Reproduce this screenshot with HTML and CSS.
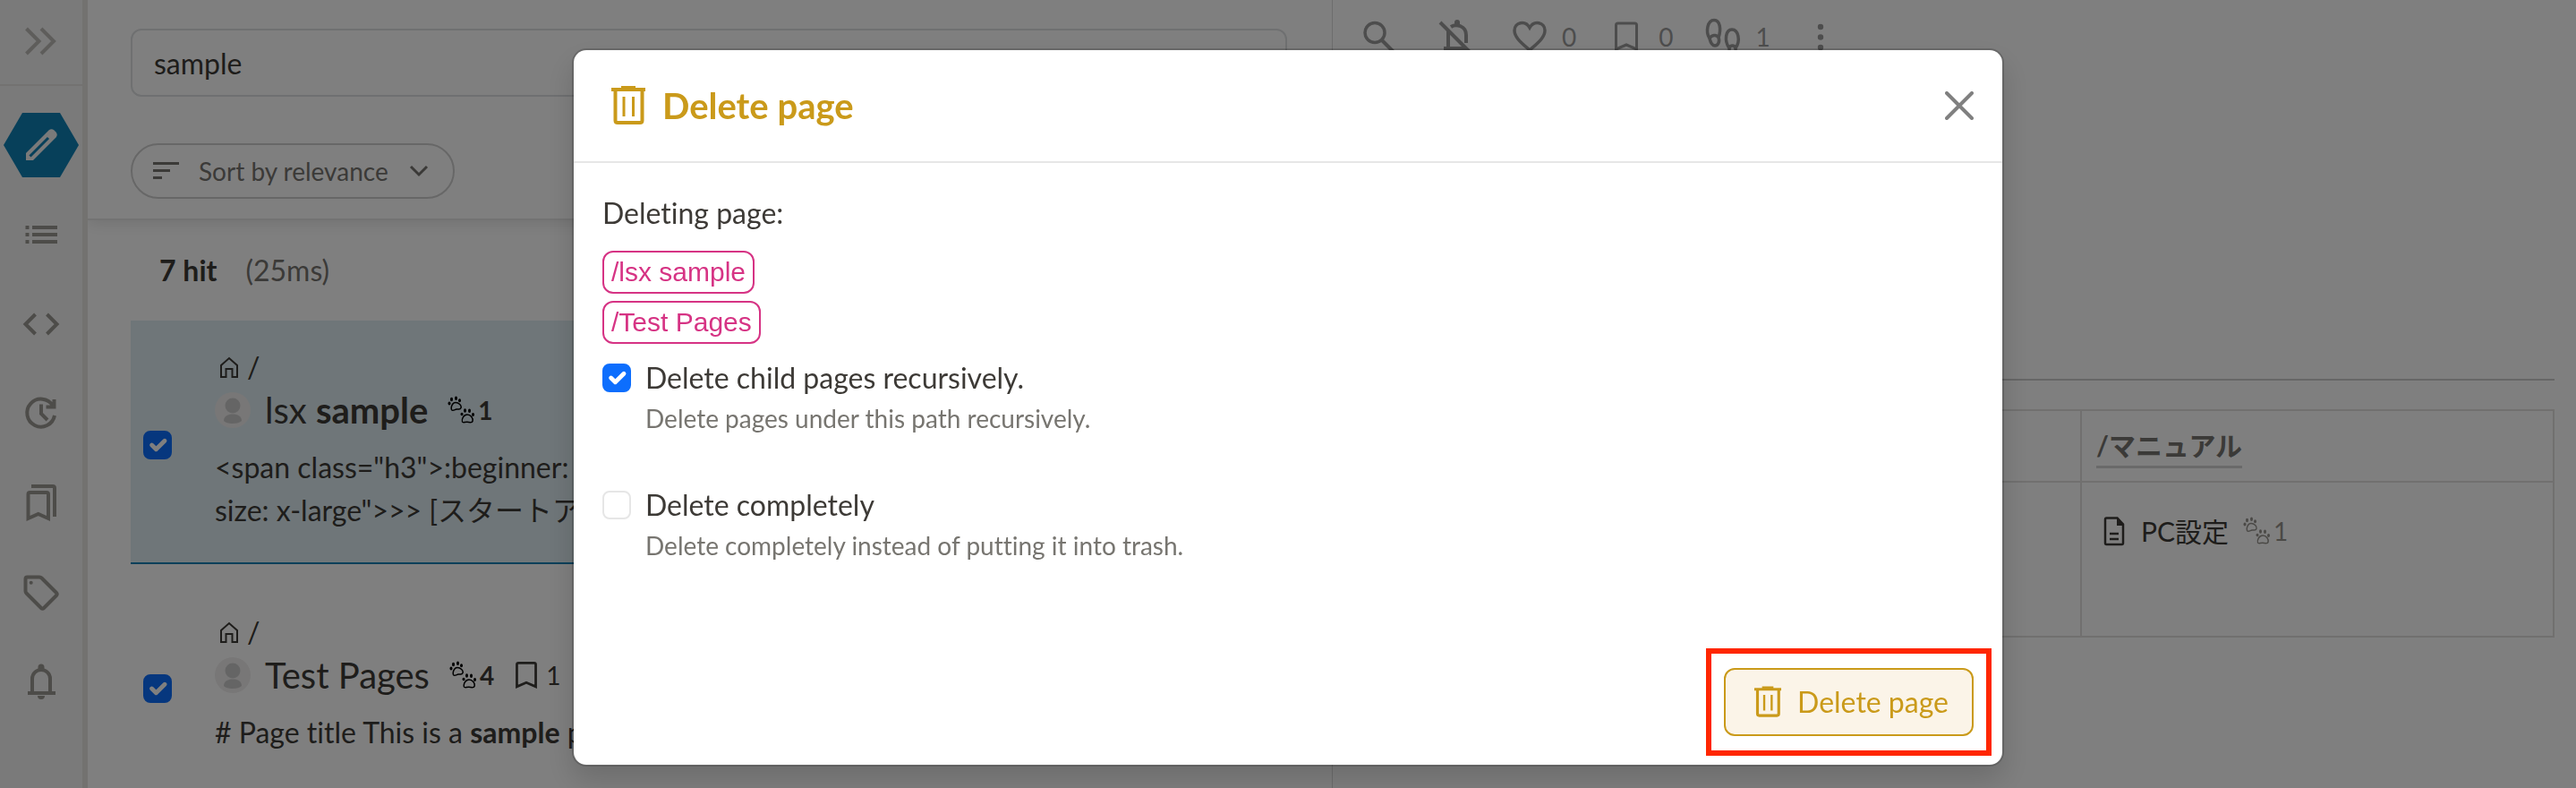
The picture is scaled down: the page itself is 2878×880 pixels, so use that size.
FILE: index.html
```html
<!DOCTYPE html>
<html lang="en">
<head>
  <meta charset="UTF-8">
  <title>Search: sample</title>
  <link rel="stylesheet" href="styles.css">
</head>
<body>
  <!-- shared icons -->
  <svg class="sprite" aria-hidden="true">
    <symbol id="i-trash" viewBox="0 0 48 48">
      <path d="M5 6h38M16 4h16M9.500 7v33.500q0 2.500 2.500 2.500h25q2.500 0 2.500-2.500V7" stroke-width="4"/>
      <path d="M19 14v22M29.500 14v22" stroke-width="3"/>
    </symbol>
    <symbol id="i-home" viewBox="0 0 32 32">
      <path d="M7 27V14l9-8 9 8v13h-5.500v-9h-7v9z" stroke-width="2"/>
    </symbol>
    <symbol id="i-bookmark" viewBox="0 0 48 48">
      <path d="M12.500 38V11q0-2 2-2h19q2 0 2 2v27L24 33z" stroke-width="3"/>
    </symbol>
    <symbol id="i-paws" viewBox="0 0 32 32">
      <g>
        <path d="M4.500 15.500c-1-3 1-8 4.500-8s7 3.500 6 6-3 1-5 1.500-4.500 2.500-5.500.5z" stroke-width="1.500"/>
        <g class="solid"><ellipse cx="2" cy="8.500" rx="1.500" ry="2"/><ellipse cx="4.500" cy="4" rx="1.500" ry="2.200"/><ellipse cx="9.500" cy="2.700" rx="1.500" ry="2.200"/><ellipse cx="13.500" cy="5.300" rx="1.500" ry="2"/></g>
      </g>
      <g>
        <path d="M16.500 29c-1-3 1.500-8 5.500-8s7 4 6 7.500c-.5 2-3.500 1-6 .8s-4.800 1.200-5.500-.3z" stroke-width="1.500"/>
        <g class="solid"><ellipse cx="16" cy="20.500" rx="1.500" ry="1.800"/><ellipse cx="19.500" cy="16.500" rx="1.500" ry="2.200"/><ellipse cx="24.500" cy="16.800" rx="1.500" ry="2.200"/><ellipse cx="28.500" cy="21" rx="1.500" ry="1.900"/></g>
      </g>
    </symbol>
    <symbol id="i-user" viewBox="0 0 40 40">
      <circle cx="20" cy="20" r="20" class="avatar-bg"/>
      <circle cx="20" cy="15" r="8.500" class="avatar-fg"/>
      <path d="M10 32c0-5 4-7.500 10-7.500S30 27 30 32c-2 2-5 3-10 3s-8-1-10-3z" class="avatar-fg"/>
    </symbol>
  </svg>

  <div class="app">
    <nav class="sidebar">
      <button class="sidebar-toggle" aria-label="Expand sidebar">
        <svg class="icon" viewBox="0 0 48 48"><path d="M7.500 9 21.500 23 7.500 37M24 9 38 23 24 37" stroke-width="4"/></svg>
      </button>
      <button class="sidebar-edit" aria-label="Create page">
        <svg viewBox="0 0 84 72">
          <path class="hexagon" d="M21 0h42l21 36-21 36H21L0 36z"/>
          <path class="pencil" d="M25 53v-8l25.500-25.500q3-2.500 6 0l2 2q2.500 3 0 6L33 53z"/>
          <path class="pencil-line" d="M29.500 48.500 50 28"/>
        </svg>
      </button>
      <a href="#" class="sidebar-item" aria-label="Page tree">
        <svg class="icon" viewBox="0 0 48 48"><path d="M14 16h28M14 24h28M14 32h28M6.500 16h4M6.500 24h4M6.500 32h4" stroke-width="4"/></svg>
      </a>
      <a href="#" class="sidebar-item" aria-label="Custom sidebar">
        <svg class="icon" viewBox="0 0 48 48"><path d="M17.500 13 6.500 24l11 11M30.500 13l11 11-11 11" stroke-width="4"/></svg>
      </a>
      <a href="#" class="sidebar-item" aria-label="Recent changes">
        <svg class="icon" viewBox="0 0 48 48"><path d="M39 26A15.500 15.500 0 1 1 37 15M38.500 8v8.500h-9M24 13.500V24l7 7" stroke-width="4"/></svg>
      </a>
      <a href="#" class="sidebar-item" aria-label="Bookmarks">
        <svg class="icon" viewBox="0 0 48 48"><path d="M9.500 41V14q0-2 2-2h18.500q2 0 2 2v27l-11.250-5zM13 5h24q2 0 2 2v32" stroke-width="4"/></svg>
      </a>
      <a href="#" class="sidebar-item" aria-label="Tags">
        <svg class="icon" viewBox="0 0 48 48"><path d="M6.500 8.500q0-2 2-2H22q1.500 0 2.500 1L41 24q1.500 1.500 0 3L27 41q-1.500 1.500-3 0L7.500 24.500q-1-1-1-2.500z" stroke-width="4"/><circle class="solid" cx="12.700" cy="12.700" r="2"/></svg>
      </a>
      <a href="#" class="sidebar-item" aria-label="Notifications">
        <svg class="icon" viewBox="0 0 48 48"><path d="M9 36h31M14 36V20a10 10 0 0 1 20 0v16" stroke-width="4"/><path class="solid" d="M20.500 9V7a3.500 3.500 0 0 1 7 0v2zM20 39h8a4 4 0 0 1-8 0z"/></svg>
      </a>
    </nav>

    <main class="search">
      <div class="search-control">
        <input type="text" class="search-input" value="sample" aria-label="Search">
        <button class="sort">
          <svg class="icon-sm" viewBox="0 0 32 32"><path d="M1 7.500h29M1 15.500h19M1 23.500h10" stroke-width="3"/></svg>
          <span>Sort by relevance</span>
          <svg class="chevron" viewBox="0 0 24 24"><path d="M3 7l9 9 9-9" stroke-width="3"/></svg>
        </button>
      </div>

      <div class="hits"><strong>7 hit</strong><span>(25ms)</span></div>

      <ul class="results">
        <li class="result active">
          <input type="checkbox" class="check" aria-label="Select lsx sample" checked>
          <div class="result-body">
            <div class="path"><svg class="icon-sm"><use href="#i-home"/></svg>/</div>
            <div class="result-title">
              <svg class="avatar"><use href="#i-user"/></svg>
              <a href="#">lsx <strong>sample</strong></a>
              <span class="count"><svg class="icon-sm paws"><use href="#i-paws"/></svg><strong>1</strong></span>
            </div>
            <p class="snippet">&lt;span class="h3"&gt;:beginner:<br>size: x-large"&gt;&gt;&gt; [スタートア</p>
          </div>
        </li>
        <li class="result">
          <input type="checkbox" class="check" aria-label="Select Test Pages" checked>
          <div class="result-body">
            <div class="path"><svg class="icon-sm"><use href="#i-home"/></svg>/</div>
            <div class="result-title">
              <svg class="avatar"><use href="#i-user"/></svg>
              <a href="#">Test Pages</a>
              <span class="count"><svg class="icon-sm paws"><use href="#i-paws"/></svg><strong>4</strong></span>
              <span class="count"><svg class="icon-md"><use href="#i-bookmark"/></svg>1</span>
            </div>
            <p class="snippet"># Page title This is a <strong>sample</strong> page</p>
          </div>
        </li>
      </ul>
    </main>

    <section class="preview">
      <div class="toolbar">
        <button class="plain" aria-label="Search"><svg class="icon" viewBox="0 0 48 48"><circle cx="19" cy="19.500" r="11" stroke-width="3.500"/><path d="M27 28l14 14" stroke-width="4"/></svg></button>
        <button class="plain" aria-label="Subscribe"><svg class="icon" viewBox="0 0 48 48"><path d="M8 8l33 33M12 37h25M17 36V18M20 13c6-4 17-1 17 9v9" stroke-width="4"/><path class="solid" d="M24 10V8a3 3 0 0 1 6 0v3z"/></svg></button>
        <button aria-label="Like"><svg class="icon" viewBox="0 0 48 48"><path d="M24 39C15 31 7 25 7 17c0-9 12-12 17-3 5-9 17-6 17 3 0 8-8 14-17 22z" stroke-width="3.500"/></svg><span>0</span></button>
        <button aria-label="Bookmark"><svg class="icon"><use href="#i-bookmark"/></svg><span>0</span></button>
        <button aria-label="Seen by"><svg class="icon" viewBox="0 0 48 48"><path d="M8 26C3 18 6 5.500 13 5.500S21 16 18 25M8 26c2-4 8-5 10-1 2 5-1 9-4 9s-5-4-6-8zM30 37c-6-9-4-21 3-21s10 12 4 21M30 37c1-4 6-4 7 0 1 5-1 8-3.500 8S30 41 30 37z" stroke-width="3.500"/></svg><span>1</span></button>
        <button aria-label="More"><svg class="icon solid" viewBox="0 0 48 48"><circle cx="24" cy="13" r="3.200"/><circle cx="24" cy="24.500" r="3.200"/><circle cx="24" cy="36" r="3.200"/></svg></button>
      </div>
      <hr>
      <table>
        <thead>
          <tr><th></th><th class="manual"><a href="#">/マニュアル</a></th></tr>
        </thead>
        <tbody>
          <tr>
            <td></td>
            <td>
              <div class="page-row">
                <svg class="doc" viewBox="0 0 24 34"><path d="M3.500 2.500h12l6.500 7v21q0 1.500-1.500 1.500h-17Q2 32 2 30.500V4q0-1.500 1.500-1.500zM7 20h10M7 26h10" stroke-width="2.500"/><path class="solid" d="M15 2v9h8z"/></svg>
                <a href="#">PC設定</a>
                <span class="count muted"><svg class="icon-sm paws"><use href="#i-paws"/></svg>1</span>
              </div>
            </td>
          </tr>
        </tbody>
      </table>
    </section>
  </div>

  <div class="backdrop">
    <div class="modal" role="dialog" aria-labelledby="modalTitle">
      <div class="modal-header">
        <svg class="icon"><use href="#i-trash"/></svg>
        <h5 id="modalTitle">Delete page</h5>
        <button class="close" aria-label="Close"><svg viewBox="0 0 32 32"><path d="M2 2l28 28M30 2 2 30" stroke-width="4" stroke-linecap="round"/></svg></button>
      </div>
      <div class="modal-body">
        <p class="deleting">Deleting page:</p>
        <div class="pages">
          <code>/lsx sample</code>
          <code>/Test Pages</code>
        </div>
        <div class="option">
          <input type="checkbox" class="check" id="recursively" checked>
          <label for="recursively">Delete child pages recursively.
            <small>Delete pages under this path recursively.</small>
          </label>
        </div>
        <div class="option">
          <input type="checkbox" class="check" id="completely">
          <label for="completely">Delete completely
            <small>Delete completely instead of putting it into trash.</small>
          </label>
        </div>
      </div>
      <div class="modal-footer">
        <button class="delete"><svg><use href="#i-trash"/></svg>Delete page</button>
      </div>
    </div>
  </div>
</body>
</html>
```
FILE: styles.css
```css
* {
  box-sizing: border-box;
}
body {
  margin: 0;
  font-family: Lato, "Noto Sans CJK JP", sans-serif;
  font-size: 32px;
  font-variant-ligatures: none;
  line-height: 48px;
  color: #3d3a36;
  background-color: #fff;
}
button {
  font: inherit;
  font-variant-ligatures: none;
  color: inherit;
  background: none;
  border: 0;
  padding: 0;
}
a {
  color: inherit;
  text-decoration: none;
}
p, h5, ul {
  margin: 0;
  padding: 0;
}
svg {
  display: block;
  flex: none;
  fill: none;
  stroke: currentColor;
}
.sprite {
  position: absolute;
  width: 0;
  height: 0;
}
.solid {
  fill: currentColor;
  stroke: none;
}
.icon {
  width: 48px;
  height: 48px;
}
.icon-md {
  width: 44px;
  height: 44px;
}
.icon-sm {
  width: 32px;
  height: 32px;
}

.app {
  display: grid;
  grid-template-columns: auto 1fr 1fr;
  height: 100vh;
  overflow: hidden;
}

/* sidebar */
.sidebar {
  display: flex;
  flex-direction: column;
  width: 98px;
  color: #9b9892;
  background-color: #f4f4f4;
  border-right: 6px solid #e6e4e0;
}
.sidebar-toggle {
  height: 96px;
  padding-left: 22px;
  color: #bdbbb6;
  border-bottom: 2px solid #e6e5e3;
}
.sidebar-edit {
  width: 84px;
  height: 72px;
  margin: 30px 4px 40px;
}
.hexagon {
  fill: #0f81b4;
  stroke: none;
}
.pencil {
  fill: #f4f4f4;
  stroke: none;
}
.pencil-line {
  stroke: #0f81b4;
  stroke-width: 3;
}
.sidebar-item {
  padding-left: 22px;
  margin-bottom: 52px;
}

/* search pane */
.search {
  min-width: 0;
  overflow: hidden;
}
.search-control {
  display: flex;
  flex-direction: column;
  align-items: flex-start;
  padding: 32px 50px 22px 48px;
  border-bottom: 2px solid #e6e6e6;
  box-shadow: 0 4px 16px rgba(0, 0, 0, 0.1);
}
.search-input {
  width: 100%;
  height: 76px;
  padding: 0 24px;
  font: inherit;
  color: #3d3a36;
  border: 2px solid #dee0e2;
  border-radius: 12px;
  background-color: #fff;
}
.sort {
  display: flex;
  align-items: center;
  height: 62px;
  margin-top: 52px;
  padding: 0 26px 0 22px;
  color: #777570;
  border: 2px solid #cfcfcf;
  border-radius: 31px;
}
.sort span {
  margin: 0 22px 0 20px;
  font-size: 28px;
}
.chevron {
  width: 24px;
  height: 24px;
}
.hits {
  display: flex;
  gap: 32px;
  padding: 32px 80px;
}
.hits span {
  color: #777570;
}
.results {
  padding: 0 50px 0 48px;
  list-style: none;
}
.result {
  display: flex;
  align-items: center;
  gap: 48px;
  height: 272px;
  padding: 8px 14px 0;
  border-bottom: 2px solid transparent;
}
.result.active {
  background-color: #dfedf3;
  border-bottom-color: #0f81b4;
}
.result-body {
  margin-bottom: 10px;
}
.path {
  display: flex;
  align-items: center;
  gap: 4px;
  line-height: 40px;
}
.result-title {
  display: flex;
  align-items: center;
  height: 56px;
}
.result-title a {
  margin: 0 20px 0 16px;
  font-size: 40px;
}
.avatar {
  width: 40px;
  height: 40px;
}
.avatar-bg {
  fill: #f0eeee;
  stroke: none;
}
.avatar-fg {
  fill: #cbcbcb;
  stroke: none;
}
.count {
  display: flex;
  align-items: center;
  margin-right: 14px;
  font-size: 28px;
}
.paws {
  margin: 0 2px;
  color: #000;
}
.snippet {
  margin-top: 12px;
  white-space: nowrap;
}

.check {
  appearance: none;
  flex: none;
  width: 32px;
  height: 32px;
  margin: 0;
  border: 2px solid #e6e6e6;
  border-radius: 8px;
  background: #fff center / 32px 32px no-repeat;
}
.check:checked {
  border-color: #0d6efd;
  background-color: #0d6efd;
  background-image: url("data:image/svg+xml,%3Csvg xmlns='http://www.w3.org/2000/svg' viewBox='0 0 20 20'%3E%3Cpath fill='none' stroke='%23fff' stroke-linecap='round' stroke-linejoin='round' stroke-width='3' d='m6 10 3 3 6-6'/%3E%3C/svg%3E");
}

/* page preview */
.preview {
  min-width: 0;
  padding: 0 24px;
  border-left: 1px solid #dadada;
}
.toolbar {
  display: flex;
  gap: 32px;
  padding: 17px 4px 0;
  color: #9b9b9b;
}
.toolbar button {
  display: flex;
  font-size: 28px;
}
.toolbar span {
  margin-left: 12px;
}
.toolbar .plain {
  margin-right: 4px;
}
hr {
  margin: 358px 0 32px;
  border: 0;
  border-top: 2px solid #cccccc;
}
table {
  width: 100%;
  table-layout: fixed;
  border-collapse: collapse;
}
th, td {
  padding: 16px;
  text-align: left;
  vertical-align: top;
  border: 2px solid #e2e1df;
}
th {
  height: 80px;
  padding: 14px 16px;
}
td {
  height: 173px;
}
.manual {
  width: 528px;
}
.manual a {
  display: inline-block;
  line-height: 46px;
  font-size: 30px;
  color: #777570;
  border-bottom: 3px solid #d4d4d4;
}
.page-row {
  display: flex;
  align-items: center;
  padding: 14px 8px;
  font-size: 30px;
}
.doc {
  width: 24px;
  height: 34px;
  margin-right: 18px;
}
.page-row .count {
  margin-left: 14px;
}
.muted, .muted .paws {
  color: #96938d;
}

/* delete dialog */
.backdrop {
  position: fixed;
  inset: 0;
  padding-top: 54px;
  background-color: rgba(0, 0, 0, 0.5);
}
.modal {
  max-width: 1600px;
  margin: 0 auto;
  background-color: #fff;
  background-clip: padding-box;
  border: 2px solid rgba(0, 0, 0, 0.175);
  border-radius: 16px;
  box-shadow: 0 16px 32px rgba(0, 0, 0, 0.15);
}
.modal-header {
  display: flex;
  align-items: center;
  height: 126px;
  padding: 0 32px 0 37px;
  color: #ca9a1a;
  border-bottom: 2px solid #e6e6e6;
}
.modal-header h5 {
  margin-left: 14px;
  font-size: 40px;
}
.close {
  margin-left: auto;
  color: #808080;
}
.close svg {
  width: 32px;
  height: 32px;
}
.modal-body {
  padding: 32px 32px 48px;
}
.deleting {
  margin-bottom: 18px;
}
.pages {
  display: flex;
  flex-direction: column;
  align-items: flex-start;
  gap: 8px;
  margin-bottom: 14px;
}
code {
  padding: 0 8px;
  font-family: "Liberation Sans", sans-serif;
  font-size: 30px;
  line-height: 44px;
  color: #d63384;
  border: 2px solid #d63384;
  border-radius: 12px;
}
.option {
  display: flex;
  gap: 16px;
  margin-bottom: 52px;
}
.option .check {
  margin-top: 8px;
}
small {
  display: block;
  line-height: 42px;
  font-size: 28px;
  color: #777570;
}
.modal-footer {
  display: flex;
  justify-content: flex-end;
  padding: 16px 32px 32px;
}
.delete {
  position: relative;
  display: flex;
  align-items: center;
  gap: 14px;
  height: 76px;
  padding: 0 26px 0 28px;
  color: #ca9a1a;
  background-color: #fbf4e8;
  border: 2px solid #ca9a1a;
  border-radius: 12px;
}
.delete svg {
  width: 38px;
  height: 38px;
}
/* red frame around the button */
.delete::after {
  content: "";
  position: absolute;
  inset: -24px -22px;
  border: 6px solid #ff2600;
}
```
